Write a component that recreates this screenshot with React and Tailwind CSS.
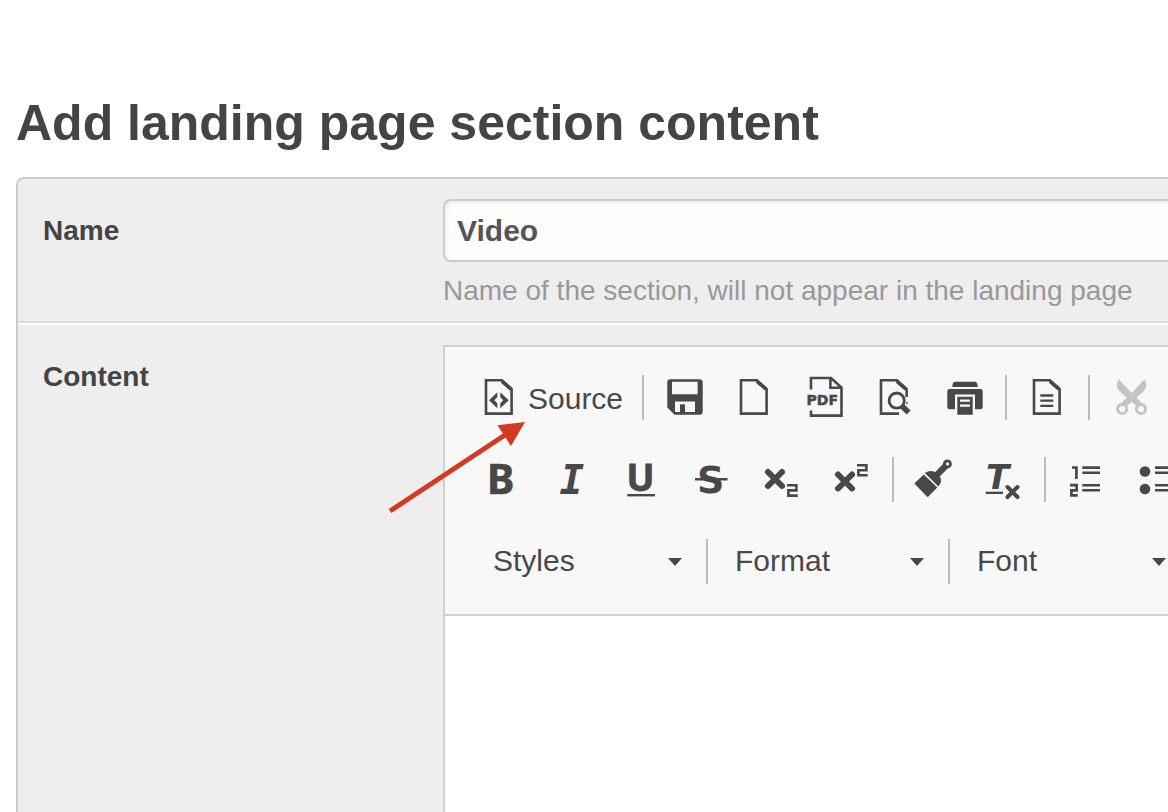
import React from "react";

const PAGE = "M4 1.3H19.8L29.6 10V34.6H4Z";

function Icon({ children, className = "" }) {
  return (
    <svg
      viewBox="0 0 36 36"
      fill="currentColor"
      aria-hidden="true"
      className={`h-9 w-9 shrink-0 overflow-visible ${className}`}
    >
      {children}
    </svg>
  );
}

function PageOutline() {
  return (
    <>
      <path d={PAGE} fill="none" stroke="currentColor" strokeWidth="2.6" />
      <path d="M20 2.4L29 10.2" fill="none" stroke="currentColor" strokeWidth="3.6" />
    </>
  );
}

function SourceIcon() {
  return (
    <Icon>
      <PageOutline />
      <path d="M7 21.3L15.3 13.3V18.3L12.3 21.3L15.3 24.2V29.2Z" />
      <path d="M26.7 21.3L18.3 13.3V18.3L21.3 21.3L18.3 24.2V29.2Z" />
    </Icon>
  );
}

function SaveIcon() {
  return (
    <Icon>
      <path
        fillRule="evenodd"
        d="M3.5 .3H32.5A3.2 3.2 0 0 1 35.7 3.5V32.5A3.2 3.2 0 0 1 32.5 35.7H7.5L.3 28.5V3.5A3.2 3.2 0 0 1 3.5 .3ZM5 2.7V15.3H30.6V2.7ZM8 22.5V32.9H28V22.5Z"
      />
      <path d="M13 25.3H18V33.2H13Z" />
    </Icon>
  );
}

function NewPageIcon() {
  return (
    <Icon>
      <PageOutline />
    </Icon>
  );
}

function PdfIcon() {
  return (
    <Icon>
      <path
        d="M4 10.5V-1H24L34.5 8.5V36.6H4V31.5M23.4 -1V8.8H34.5"
        fill="none"
        stroke="currentColor"
        strokeWidth="2.6"
      />
      <text
        x="-.5"
        y="26"
        stroke="currentColor"
        strokeWidth="0.5"
        className="font-['DejaVu_Sans',sans-serif] text-[14px] font-bold"
      >
        PDF
      </text>
    </Icon>
  );
}

function PreviewIcon() {
  return (
    <Icon>
      <path
        d="M22 34.6H4V1.3H19.8L29.6 10V18"
        fill="none"
        stroke="currentColor"
        strokeWidth="2.6"
      />
      <path d="M20 2.4L29 10.2" fill="none" stroke="currentColor" strokeWidth="3.6" />
      <circle cx="19.7" cy="21.6" r="7.6" fill="none" stroke="currentColor" strokeWidth="2.8" />
      <path d="M25 27L31.6 33.4" fill="none" stroke="currentColor" strokeWidth="5.6" />
      <circle cx="30" cy="24" r="0.9" />
    </Icon>
  );
}

function PrintIcon() {
  return (
    <Icon>
      <path d="M8.3 2.7H27.7Q30.7 2.7 30.7 8H5.3Q5.3 2.7 8.3 2.7Z" />
      <path d="M2.6 10H33.4A2.3 2.3 0 0 1 35.7 12.3V28A2.3 2.3 0 0 1 33.4 30.3H28V15.5H8V30.3H2.6A2.3 2.3 0 0 1 .3 28V12.3A2.3 2.3 0 0 1 2.6 10Z" />
      <path
        fillRule="evenodd"
        d="M10.3 17.7H25.7V35.7H10.3ZM13 20.6V22.8H23V20.6ZM13 25.5V27.8H23V25.5Z"
      />
    </Icon>
  );
}

function TemplatesIcon() {
  return (
    <Icon>
      <PageOutline />
      <path d="M10.3 15.3H23.3V17.7H10.3ZM10.3 20.4H23.3V22.8H10.3ZM10.3 25.7H23.3V28H10.3Z" />
    </Icon>
  );
}

function CutIcon() {
  return (
    <Icon className="text-[#c4c4c4]">
      <path d="M6 .5L20.5 16L29 24L24.5 28L17 21.5L6.8 12.5C3 8.5 3 4.5 6 .5Z" />
      <path d="M31.2 .5L16.7 16L8.2 24L12.7 28L20.2 21.5L30.4 12.5C34.2 8.5 34.2 4.5 31.2 .5Z" />
      <circle cx="9.2" cy="30" r="4.6" fill="#f8f8f8" stroke="currentColor" strokeWidth="3" />
      <circle cx="28" cy="30" r="4.6" fill="#f8f8f8" stroke="currentColor" strokeWidth="3" />
    </Icon>
  );
}

function BoldIcon() {
  return (
    <Icon>
      <text
        x="3"
        y="33"
        stroke="currentColor"
        strokeWidth="0.7"
        className="font-['Noto_Sans',sans-serif] text-[41px] font-bold"
      >
        B
      </text>
    </Icon>
  );
}

function ItalicIcon() {
  return (
    <Icon>
      <text
        x="5.5"
        y="33"
        className="font-['DejaVu_Sans_Mono',monospace] text-[41px] font-bold italic"
      >
        I
      </text>
    </Icon>
  );
}

function UnderlineIcon() {
  return (
    <Icon>
      <text
        x="2.4"
        y="30"
        stroke="currentColor"
        strokeWidth="0.8"
        className="font-['Noto_Sans',sans-serif] text-[37px] font-bold"
      >
        U
      </text>
      <path d="M3.3 33H31V35.4H3.3Z" />
    </Icon>
  );
}

function StrikeIcon() {
  return (
    <Icon>
      <text x="3" y="32" className="font-['DejaVu_Sans',sans-serif] text-[38px] font-bold">
        S
      </text>
      <path d="M1 17H33.5V19.4H1Z" />
    </Icon>
  );
}

function SubscriptIcon() {
  return (
    <Icon>
      <path
        d="M4 11L18 25M18 11L4 25"
        fill="none"
        stroke="currentColor"
        strokeWidth="6"
        strokeLinecap="round"
      />
      <path
        d="M23 24.2H32.4V29.4H24.4V34.6H33.7"
        fill="none"
        stroke="currentColor"
        strokeWidth="2.6"
      />
    </Icon>
  );
}

function SuperscriptIcon() {
  return (
    <Icon>
      <path
        d="M4 13.5L18 27.5M18 13.5L4 27.5"
        fill="none"
        stroke="currentColor"
        strokeWidth="6"
        strokeLinecap="round"
      />
      <path
        d="M23 4.2H32.4V9.2H24.4V14.2H33.7"
        fill="none"
        stroke="currentColor"
        strokeWidth="2.6"
      />
    </Icon>
  );
}

function BrushIcon() {
  return (
    <Icon>
      <path d="M-1.7 22.5L7.8 13.5L21.3 26.5L11.7 36.2Z" />
      <path d="M8.8 12.1Q14 8.5 19.3 11.3L24.5 16.8Q26.5 20.5 22.3 25.5Z" />
      <path d="M20.5 14.3L31 3.5" fill="none" stroke="currentColor" strokeWidth="6.4" />
      <circle cx="31.4" cy="2.9" r="4.5" />
      <circle cx="31.6" cy="2.9" r="1.6" fill="#f8f8f8" />
    </Icon>
  );
}

function RemoveFormatIcon() {
  return (
    <Icon>
      <text x="0" y="28" className="font-['DejaVu_Sans',sans-serif] text-[34px] font-bold italic">
        T
      </text>
      <path d="M-.3 30.7H17V33H-.3Z" />
      <path
        d="M21.5 26L31.5 36M31.5 26L21.5 36"
        fill="none"
        stroke="currentColor"
        strokeWidth="4"
        strokeLinecap="round"
      />
    </Icon>
  );
}

function NumberedListIcon() {
  return (
    <Icon>
      <path
        d="M4 6.5H8.4V18M2 24.2H8.6V29.3H3.4V34.3H9.7"
        fill="none"
        stroke="currentColor"
        strokeWidth="2.7"
      />
      <path d="M14.3 5.3H32V7.9H14.3ZM14.3 10.5H32V13H14.3ZM14.3 22.9H32V25.4H14.3ZM14.3 28H32V30.5H14.3Z" />
    </Icon>
  );
}

function BulletedListIcon() {
  return (
    <Icon>
      <circle cx="7" cy="10.5" r="5.3" />
      <circle cx="7" cy="28" r="5.3" />
      <path d="M17 5.3H35V7.9H17ZM17 10.5H35V13H17ZM17 22.9H35V25.4H17ZM17 28H35V30.5H17Z" />
    </Icon>
  );
}

function Tool({ label, children, disabled = false }) {
  return (
    <button
      type="button"
      aria-label={label}
      disabled={disabled}
      className="flex h-11 shrink-0 items-center px-[17px]"
    >
      {children}
    </button>
  );
}

function Separator({ className = "mx-[5px]" }) {
  return <span className={`h-[45px] w-[2px] shrink-0 bg-[#bcbcbc] ${className}`} />;
}

function Row({ children }) {
  return <div className="flex h-[82px] items-center overflow-hidden">{children}</div>;
}

function Combo({ label }) {
  return (
    <div className="relative w-[239px] shrink-0">
      <select
        aria-label={label}
        className="h-11 w-full appearance-none bg-transparent pl-[26px] text-[30px] leading-[44px] outline-none"
      >
        <option>{label}</option>
      </select>
      <svg
        viewBox="0 0 14 8"
        fill="currentColor"
        aria-hidden="true"
        className="pointer-events-none absolute top-[19px] right-6 h-2 w-3.5"
      >
        <path d="M0 0H14L7 8Z" />
      </svg>
    </div>
  );
}

export default function App() {
  return (
    <main className="flex min-h-screen flex-col overflow-x-hidden bg-white pl-4 font-['Liberation_Sans',Arial,sans-serif] text-[#444]">
      <h1 className="mt-[93px] mb-6 text-[50px] leading-[60px] font-bold whitespace-nowrap">
        Add landing page section content
      </h1>

      <form className="flex flex-1 flex-col rounded-tl-lg border-t-2 border-l-2 border-[#ccc] bg-[#eee]">
        <div className="flex border-b-2 border-[#ddd] pt-5 pb-3">
          <label
            htmlFor="section-name"
            className="w-[425px] shrink-0 pt-4 pl-[25px] text-[28px] leading-8 font-bold"
          >
            Name
          </label>
          <div className="min-w-0 flex-1">
            <input
              id="section-name"
              type="text"
              defaultValue="Video"
              aria-describedby="name-hint"
              className="block h-[63px] w-full rounded-l-lg border-2 border-r-0 border-[#ccc] bg-[#fdfdfd] px-3 text-[30px] font-bold text-[#555] shadow-[inset_3px_3px_5px_-2px_rgba(0,0,0,0.08)] outline-none"
            />
            <p
              id="name-hint"
              className="mt-[11px] text-[28px] leading-9 whitespace-nowrap text-[#999]"
            >
              Name of the section, will not appear in the landing page
            </p>
          </div>
        </div>

        <div className="flex flex-1 border-t-2 border-white pt-5">
          <label
            htmlFor="section-content"
            className="w-[425px] shrink-0 pt-4 pl-[25px] text-[28px] leading-8 font-bold"
          >
            Content
          </label>
          <div className="relative flex min-w-0 flex-1 flex-col border-t-2 border-l-2 border-[#d1d1d1] bg-white">
            <div
              role="toolbar"
              aria-label="Editor toolbar"
              className="border-b-2 border-[#d1d1d1] bg-[#f8f8f8] pt-[9px] pb-3 pl-[22px] text-[#484848]"
            >
              <Row>
                <button
                  type="button"
                  className="flex h-11 shrink-0 items-center gap-2.5 pr-3.5 pl-[15px] text-[30px]"
                >
                  <SourceIcon />
                  <span className="pt-0.5">Source</span>
                </button>
                <Separator className="mr-1.5 ml-[5px]" />
                <Tool label="Save"><SaveIcon /></Tool>
                <Tool label="New Page"><NewPageIcon /></Tool>
                <Tool label="Export to PDF"><PdfIcon /></Tool>
                <Tool label="Preview"><PreviewIcon /></Tool>
                <Tool label="Print"><PrintIcon /></Tool>
                <Separator className="mr-1.5 ml-[5px]" />
                <Tool label="Templates"><TemplatesIcon /></Tool>
                <Separator className="mr-1.5 ml-[5px]" />
                <Tool label="Cut" disabled><CutIcon /></Tool>
              </Row>
              <Row>
                <Tool label="Bold"><BoldIcon /></Tool>
                <Tool label="Italic"><ItalicIcon /></Tool>
                <Tool label="Underline"><UnderlineIcon /></Tool>
                <Tool label="Strikethrough"><StrikeIcon /></Tool>
                <Tool label="Subscript"><SubscriptIcon /></Tool>
                <Tool label="Superscript"><SuperscriptIcon /></Tool>
                <Separator />
                <Tool label="Copy Formatting"><BrushIcon /></Tool>
                <Tool label="Remove Format"><RemoveFormatIcon /></Tool>
                <Separator />
                <Tool label="Numbered List"><NumberedListIcon /></Tool>
                <Tool label="Bulleted List"><BulletedListIcon /></Tool>
              </Row>
              <Row>
                <Combo label="Styles" />
                <Separator className="mr-px" />
                <Combo label="Format" />
                <Separator className="mr-px" />
                <Combo label="Font" />
              </Row>
            </div>
            <textarea
              id="section-content"
              className="block w-full flex-1 resize-none bg-white p-5 text-[28px] outline-none"
            />
            <svg
              viewBox="0 0 150 105"
              aria-hidden="true"
              className="pointer-events-none absolute top-[68px] left-[-65px] h-[105px] w-[150px]"
            >
              <path d="M10 96L125 20" stroke="#d23a22" strokeWidth="5" />
              <path d="M145 7L117.5 10.3L131 31Z" fill="#d23a22" />
            </svg>
          </div>
        </div>
      </form>
    </main>
  );
}
